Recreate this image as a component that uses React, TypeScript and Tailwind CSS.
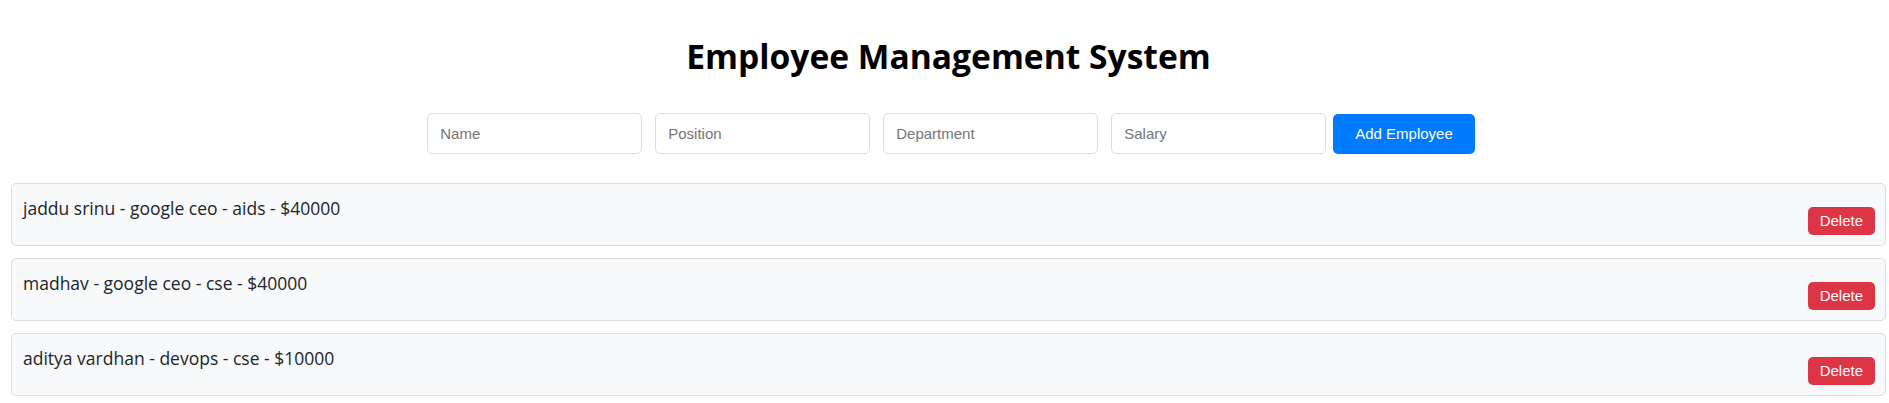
import { useState } from "react";

type Employee = {
  id: number;
  name: string;
  position: string;
  department: string;
  salary: number;
};

const initialEmployees: Employee[] = [
  { id: 1, name: "jaddu srinu", position: "google ceo", department: "aids", salary: 40000 },
  { id: 2, name: "madhav", position: "google ceo", department: "cse", salary: 40000 },
  { id: 3, name: "aditya vardhan", position: "devops", department: "cse", salary: 10000 },
];

const fields = [
  { key: "name", placeholder: "Name" },
  { key: "position", placeholder: "Position" },
  { key: "department", placeholder: "Department" },
  { key: "salary", placeholder: "Salary" },
] as const;

export default function App() {
  const [employees, setEmployees] = useState<Employee[]>(initialEmployees);
  const [form, setForm] = useState({ name: "", position: "", department: "", salary: "" });

  const addEmployee = () => {
    if (!form.name) return;
    setEmployees([
      ...employees,
      { id: Date.now(), ...form, salary: Number(form.salary) || 0 },
    ]);
    setForm({ name: "", position: "", department: "", salary: "" });
  };

  return (
    <div className="w-full overflow-x-hidden bg-white">
      <div className="w-[1897px] font-['Open_Sans',sans-serif] text-[#212529]">
        {/* Title */}
        <h1 className="mt-[33px] h-[46px] text-center text-[33.6px] leading-[46px] font-bold text-black">
          Employee Management System
        </h1>

        {/* Form */}
        <div className="mt-[34px] flex items-end justify-center pl-[5px] font-['Liberation_Sans',Arial,sans-serif]">
          <div className="flex gap-[13px]">
            {fields.map((f) => (
              <input
                key={f.key}
                placeholder={f.placeholder}
                value={form[f.key]}
                onChange={(e) => setForm({ ...form, [f.key]: e.target.value })}
                className="h-[41px] w-[215px] rounded-[5px] border border-[#dddddd] bg-white px-[12px] text-[15px] outline-none placeholder:text-[#757575]"
              />
            ))}
          </div>
          <button
            onClick={addEmployee}
            className="ml-[7px] h-[40px] rounded-[5px] bg-[#007bff] px-[22px] text-[15px] text-white"
          >
            Add Employee
          </button>
        </div>

        {/* List */}
        <ul className="mx-[11px] mt-[29px] flex flex-col gap-[12px]">
          {employees.map((emp) => (
            <li
              key={emp.id}
              className="flex h-[63px] justify-between rounded-[5px] border border-[#dddddd] bg-[#f8f9fa] pl-[11px] pr-[10px]"
            >
              <span className="mt-[12px] self-start text-[17.5px] leading-[24px]">
                {emp.name} - {emp.position} - {emp.department} - ${emp.salary}
              </span>
              <button
                onClick={() => setEmployees(employees.filter((e) => e.id !== emp.id))}
                className="mb-[10px] h-[28px] self-end rounded-[5px] bg-[#dc3545] px-[12px] font-['Liberation_Sans',Arial,sans-serif] text-[15px] text-white"
              >
                Delete
              </button>
            </li>
          ))}
        </ul>
      </div>
    </div>
  );
}
